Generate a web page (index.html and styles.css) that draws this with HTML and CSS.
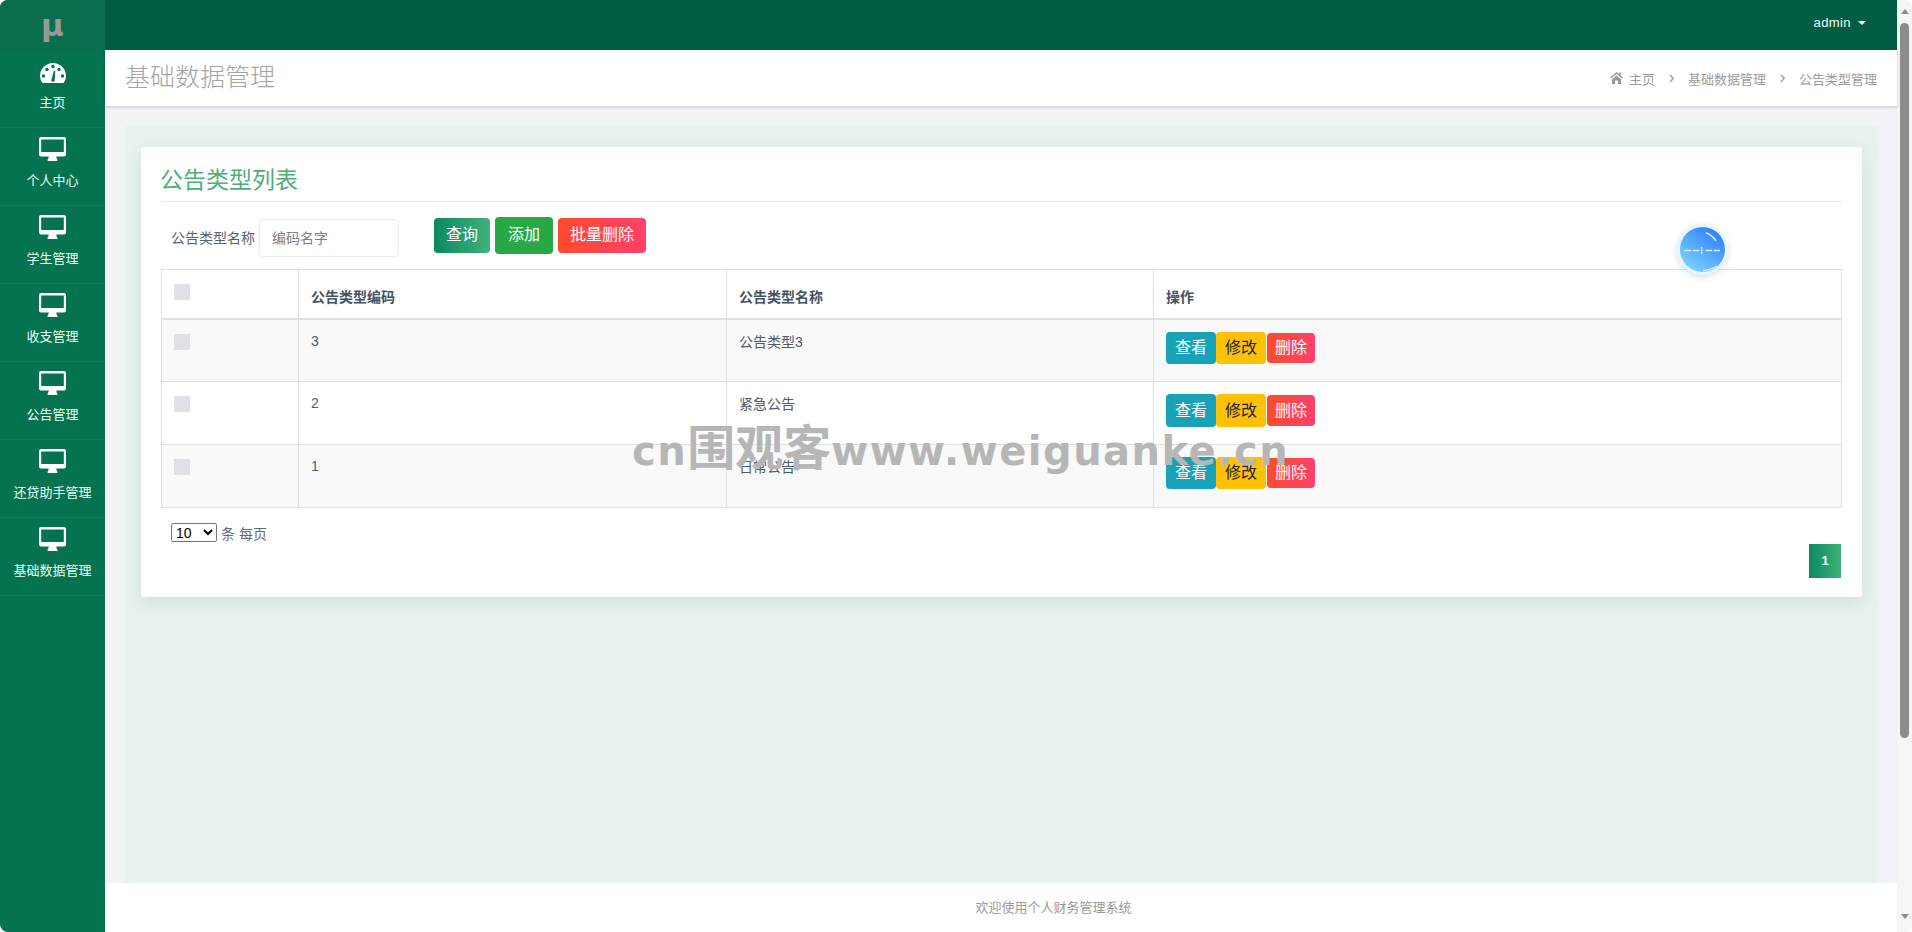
FILE: index.html
```html
<!DOCTYPE html>
<html lang="zh-CN">
<head>
<meta charset="utf-8">
<title>公告类型管理</title>
<link rel="stylesheet" href="styles.css">
</head>
<body>
<svg class="defs" width="0" height="0" aria-hidden="true">
  <symbol id="desktop" viewBox="0 0 27 24">
    <path fill-rule="evenodd" d="M2 0H25a2 2 0 0 1 2 2V17.5a2 2 0 0 1-2 2H17.2L17.9 22.2H18.4V24H8.6V22.2H9.1L9.8 19.5H2a2 2 0 0 1-2-2V2A2 2 0 0 1 2 0ZM2.2 2.6V14.9H24.8V2.6Z"/>
  </symbol>
</svg>
<div class="app">
  <aside class="sidebar">
    <div class="logo">µ</div>
    <nav class="nav">
      <a class="nav-item">
        <svg class="nav-icon" viewBox="0 0 27 24">
          <path class="gauge" d="M3.5 24C2 22 1 19.5 1 17A13 13 0 0 1 27 17C27 19.5 26 22 24.5 24Z"/>
          <g class="gauge-dots">
            <circle cx="4.5" cy="17" r="1.7"/><circle cx="8" cy="10.5" r="1.7"/><circle cx="14" cy="7.5" r="1.7"/><circle cx="20" cy="10.5" r="1.7"/><circle cx="23.5" cy="17" r="1.7"/>
            <path d="M12.2 21.5L15 11.5L16.3 11.8L15.6 21.8A1.8 1.8 0 0 1 12.2 21.5Z"/>
          </g>
        </svg>
        <span>主页</span>
      </a>
      <a class="nav-item"><svg class="nav-icon"><use href="#desktop"/></svg><span>个人中心</span></a>
      <a class="nav-item"><svg class="nav-icon"><use href="#desktop"/></svg><span>学生管理</span></a>
      <a class="nav-item"><svg class="nav-icon"><use href="#desktop"/></svg><span>收支管理</span></a>
      <a class="nav-item"><svg class="nav-icon"><use href="#desktop"/></svg><span>公告管理</span></a>
      <a class="nav-item"><svg class="nav-icon"><use href="#desktop"/></svg><span>还贷助手管理</span></a>
      <a class="nav-item"><svg class="nav-icon"><use href="#desktop"/></svg><span>基础数据管理</span></a>
    </nav>
  </aside>

  <div class="main">
    <header class="topbar">
      <span class="user">admin</span><i class="caret"></i>
    </header>
    <div class="page-head">
      <h1 class="page-title">基础数据管理</h1>
      <div class="crumbs">
        <svg class="home" viewBox="0 0 13 12"><path d="M6.5 0L0 5.5L.9 6.6L6.5 2L12.1 6.6L13 5.5L10.7 3.6V.6H9V2.2Z"/><path d="M2 7.2L6.5 3.5L11 7.2V12H8V8.4H5V12H2Z"/></svg>
        <span>主页</span><span class="sep">›</span><span>基础数据管理</span><span class="sep">›</span><span>公告类型管理</span>
      </div>
    </div>
    <div class="content">
      <section class="panel">
        <div class="card">
          <h2 class="card-title">公告类型列表</h2>
          <div class="filters">
            <label class="filter-label">公告类型名称</label>
            <input class="filter-input" placeholder="编码名字">
            <div class="filter-btns">
              <button class="btn btn-query">查询</button>
              <button class="btn btn-add">添加</button>
              <button class="btn btn-bulk">批量删除</button>
            </div>
          </div>
          <table class="table">
            <colgroup><col class="c1"><col class="c2"><col class="c3"><col class="c4"></colgroup>
            <thead>
              <tr>
                <th class="check-cell"><input class="check" type="checkbox"></th>
                <th>公告类型编码</th>
                <th>公告类型名称</th>
                <th>操作</th>
              </tr>
            </thead>
            <tbody>
              <tr>
                <td><input class="check" type="checkbox"></td>
                <td class="num">3</td>
                <td>公告类型3</td>
                <td><div class="ops"><button class="op op-view">查看</button><button class="op op-edit">修改</button><button class="op op-del">删除</button></div></td>
              </tr>
              <tr class="tall">
                <td><input class="check" type="checkbox"></td>
                <td class="num">2</td>
                <td>紧急公告</td>
                <td><div class="ops"><button class="op op-view">查看</button><button class="op op-edit">修改</button><button class="op op-del">删除</button></div></td>
              </tr>
              <tr>
                <td><input class="check" type="checkbox"></td>
                <td class="num">1</td>
                <td>日常公告</td>
                <td><div class="ops"><button class="op op-view">查看</button><button class="op op-edit">修改</button><button class="op op-del">删除</button></div></td>
              </tr>
            </tbody>
          </table>
          <div class="page-size">
            <select class="size-select"><option>10</option></select>
            <span>条 每页</span>
          </div>
          <div class="pager"><a class="page-num">1</a></div>
        </div>
      </section>
    </div>
    <footer class="footer">欢迎使用个人财务管理系统</footer>
  </div>

  <div class="scrollbar">
    <i class="arrow-up"></i>
    <div class="thumb"></div>
    <i class="arrow-down"></i>
  </div>

  <div class="orb">
    <svg viewBox="1 1 45 45" width="45" height="45">
      <g class="orb-lines">
        <path d="M5.3 24.5H12M13.7 24.5H20.3M26.7 24.5H33.3M35 24.5H41"/>
        <path d="M27 6.7Q33 9 37 14.7"/>
        <path class="orb-shine" d="M24 44.5Q32 44 38 40"/>
      </g>
      <circle class="orb-dot" cx="22.7" cy="22" r="1"/><circle class="orb-dot" cx="22.7" cy="24.5" r="1"/><circle class="orb-dot" cx="22.7" cy="27" r="1"/>
    </svg>
  </div>
  <div class="watermark">cn<span class="wm-cjk">围观客</span>www.weiguanke.cn</div>
</div>
</body>
</html>
```
FILE: styles.css
```css
* { box-sizing: border-box; }
html, body { margin: 0; height: 100%; background: #fff; overflow: hidden; }
body {
  font-family: "Liberation Sans", "Noto Sans CJK SC", sans-serif;
  font-size: 14px;
  color: #4f5b67;
}
.defs { position: absolute; }
.app {
  position: relative;
  display: flex;
  height: 932px;
  overflow: hidden;
  border-radius: 8px;
  background: #f0f2f6;
}

/* sidebar */
.sidebar { width: 105px; flex: none; background: #05734f; color: #eafff5; }
.logo {
  height: 50px;
  background: #0a6d50;
  color: #959a97;
  font: bold 31px/50px "DejaVu Sans", sans-serif;
  text-align: center;
}
.nav-item {
  display: flex;
  flex-direction: column;
  align-items: center;
  height: 78px;
  padding-top: 9px;
  border-bottom: 1px solid rgba(255,255,255,.05);
  font-size: 13px;
  line-height: 18px;
}
.nav-item span { margin-top: 11px; white-space: nowrap; }
.nav-icon { width: 27px; height: 24px; fill: #fff; }
.gauge { fill: #fff; }
.gauge-dots { fill: #05734f; }

/* main */
.main { flex: 1; min-width: 0; display: flex; flex-direction: column; }
.topbar {
  height: 50px;
  flex: none;
  background: #005c43;
  display: flex;
  align-items: center;
  justify-content: flex-end;
  padding: 0 31px 5px 0;
  color: #effff7;
  font-size: 13px;
}
.user { letter-spacing: .4px; }
.caret {
  margin-left: 7px;
  border: 4px solid transparent;
  border-top-color: #fff;
  border-bottom: 0;
}
.page-head {
  position: relative;
  z-index: 1;
  height: 56px;
  flex: none;
  background: #fff;
  box-shadow: 0 1px 3px rgba(0,0,0,.18);
  display: flex;
  align-items: center;
  justify-content: space-between;
  padding: 0 20px;
}
.page-title { margin: 0 0 2px; font-size: 25px; font-weight: 300; color: #a4a4a4; line-height: 1; }
.crumbs { display: flex; align-items: center; font-size: 13px; color: #9c9c9c; }
.home { width: 13px; height: 12px; margin-right: 6px; fill: #999; }
.sep { width: 33px; margin-top: -3px; font-size: 18px; line-height: 18px; text-align: center; font-family: "Liberation Sans", sans-serif; }

.content { flex: 1; min-height: 0; padding: 20px 20px 0; overflow: hidden; display: flex; }
.panel { flex: 1; background: #e6f3ec; padding: 21px 16px 0; }
.card {
  background: #fff;
  border-radius: 3px;
  padding: 16px 20px 19px;
  box-shadow: 0 6px 16px rgba(60,80,110,.12);
}
.card-title {
  margin: 0;
  height: 39px;
  border-bottom: 1px solid #e9ecef;
  font-size: 23px;
  font-weight: 400;
  line-height: 34px;
  text-indent: -1px;
  color: #4fad78;
}
.filters { display: flex; align-items: center; height: 40px; margin: 15px 0 12px; padding-left: 10px; }
.filter-label { width: 88px; flex: none; white-space: nowrap; color: #56626e; }
.filter-input {
  width: 140px;
  height: 38px;
  margin-top: 2px;
  padding: 0 12px;
  border: 1px solid #e8edf0;
  border-radius: 4px;
  background: #fff;
  font: 14px "Liberation Sans", "Noto Sans CJK SC", sans-serif;
}
.filter-input::placeholder { color: #7b7f83; }
.filter-btns { display: flex; align-items: center; gap: 5px; height: 37px; margin: 0 0 3px 35px; align-self: flex-start; }
.btn, .op {
  border: 0;
  border-radius: 4px;
  color: #fff;
  font: 16px/24px "Liberation Sans", "Noto Sans CJK SC", sans-serif;
  white-space: nowrap;
}
.btn { padding: 4.5px 12px 6.5px; }
.btn-query, .page-num { background: linear-gradient(90deg, #0b8a5f, #3fb27a); }
.btn-add { background: #28a745; padding: 5.5px 13px 7.5px; }
.btn-bulk, .op-del { background: linear-gradient(90deg, #ff4b2b, #ff416c); }

/* table */
.table { width: 1680px; table-layout: fixed; border-collapse: collapse; color: #4f5b67; }
.c1 { width: 137px; }
.c2 { width: 428px; }
.c3 { width: 427px; }
.c4 { width: 688px; }
.table th, .table td { border: 1px solid #dee2e6; text-align: left; line-height: 21px; }
.table th {
  height: 49px;
  padding: 12px 12px 10px;
  vertical-align: bottom;
  font-weight: 700;
  color: #465260;
  border-bottom-width: 2px;
}
.table th.check-cell { vertical-align: top; }
.table td { height: 63px; padding: 12px; vertical-align: top; }
.table tbody tr:nth-child(odd) td { background: #f9f9f9; }
.num { line-height: 19px !important; }
.check {
  display: block;
  width: 16px;
  height: 16px;
  margin: 2px 0 0;
  appearance: none;
  background: #dee2e6;
  border: 0;
}
.ops { display: flex; align-items: center; }
.op { padding: 4px 9px; }
.op-view { background: #17a2b8; }
.op-edit { background: #ffc107; color: #212529; }
.op-del { padding: 3px 8px; margin-left: 1px; }
.tall .op { padding-top: 4.5px; padding-bottom: 4.5px; }
.tall .op-del { padding-top: 3.5px; padding-bottom: 3.5px; }

.page-size { display: flex; align-items: center; gap: 4px; height: 19px; margin-top: 15px; padding-left: 10px; color: #5f6a75; font-size: 14px; }
.size-select {
  width: 46px;
  height: 19px;
  padding: 0;
  background: #fff;
  color: #000;
  border: 1px solid #767676;
  border-radius: 2px;
  font: 14px "Liberation Sans", sans-serif;
}
.pager { display: flex; justify-content: flex-end; margin-top: 2px; padding-right: 1px; }
.page-num {
  width: 32px;
  height: 34px;
  color: #e8fff3;
  font-size: 13px;
  font-weight: 700;
  line-height: 34px;
  text-align: center;
}

.footer {
  height: 49px;
  flex: none;
  padding-left: 105px;
  background: #fff;
  color: #9a9a9a;
  font-size: 13px;
  line-height: 49px;
  text-align: center;
}

/* scrollbar */
.scrollbar {
  width: 15px;
  flex: none;
  background: #f5f5f5;
  display: flex;
  flex-direction: column;
  align-items: center;
}
.arrow-up, .arrow-down { border: 4px solid transparent; }
.arrow-up { margin-top: 9px; border-top: 0; border-bottom: 5px solid #8c8c8c; }
.arrow-down { margin-top: 176px; border-bottom: 0; border-top: 5px solid #8c8c8c; }
.thumb { width: 9px; height: 715px; margin-top: 9px; background: #8c8c8c; border-radius: 5px; }

/* floating orb */
.orb {
  position: absolute;
  left: 1680px;
  top: 227px;
  width: 45px;
  height: 45px;
  border-radius: 50%;
  background: linear-gradient(215deg, #3184ff 15%, #7fd2ff 90%);
  box-shadow: 0 0 0 3px #e8f6ff, 0 2px 6px 3px rgba(80,110,140,.22);
}
.orb svg { display: block; }
.orb-lines { fill: none; stroke: #d9f0ff; stroke-width: 1.5; }
.orb-dot { fill: #d9f0ff; }

/* watermark */
.watermark {
  position: absolute;
  left: 632px;
  top: 420px;
  font: bold 40px/56px "DejaVu Sans", "Noto Sans CJK SC", sans-serif;
  letter-spacing: 1.5px;
  color: #b6b6b6;
  white-space: nowrap;
  pointer-events: none;
}
.wm-cjk { font-size: 48px; letter-spacing: 0; }
```
